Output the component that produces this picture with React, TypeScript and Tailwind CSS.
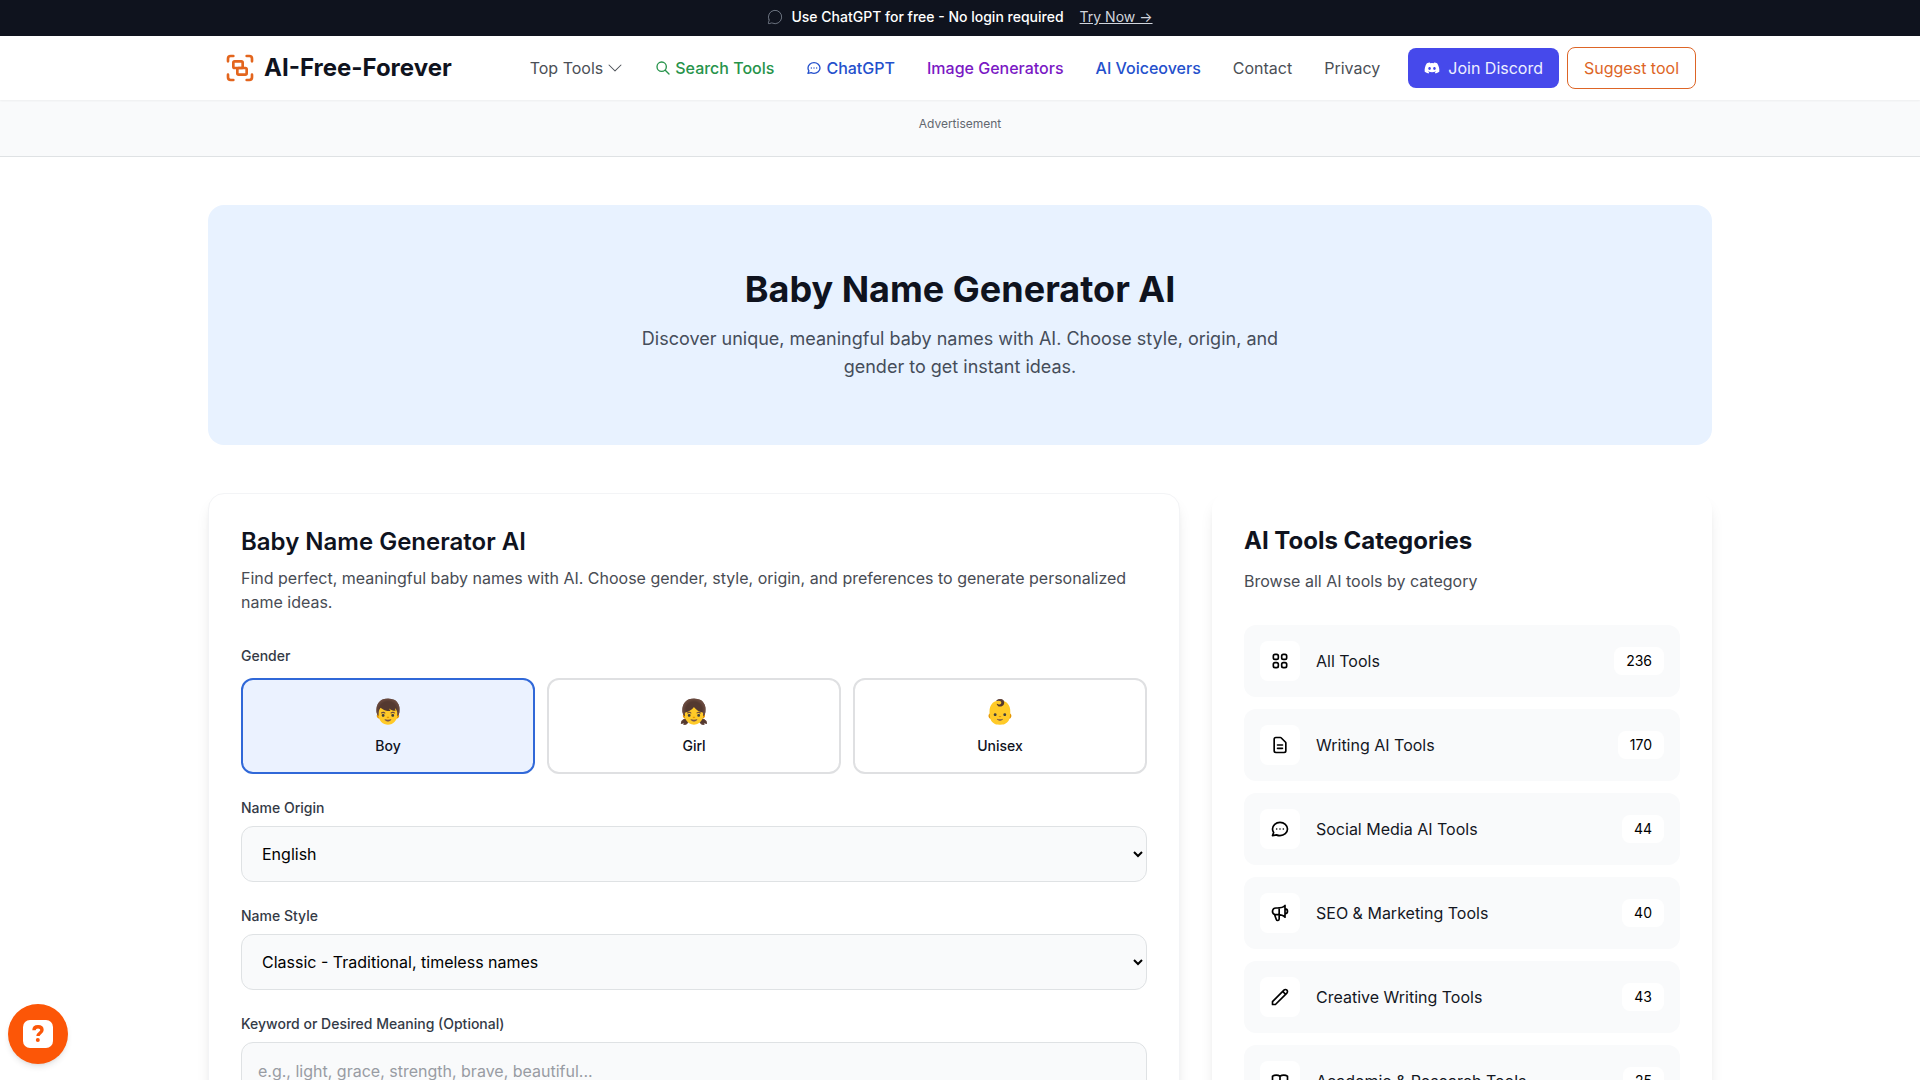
import { useState } from "react";
import { Group, MessageCircle } from "lucide-react";
import { BsChevronDown } from "react-icons/bs";
import { FaDiscord } from "react-icons/fa";
import {
  HiOutlineChat,
  HiOutlineDocumentText,
  HiOutlinePencil,
  HiOutlineSearch,
  HiOutlineSpeakerphone,
  HiOutlineBookOpen,
  HiOutlineViewGrid,
} from "react-icons/hi";

const genders = [
  { id: "boy", label: "Boy", emoji: "👦" },
  { id: "girl", label: "Girl", emoji: "👧" },
  { id: "unisex", label: "Unisex", emoji: "👶" },
];

const categories = [
  { name: "All Tools", count: 236, icon: HiOutlineViewGrid },
  { name: "Writing AI Tools", count: 170, icon: HiOutlineDocumentText },
  { name: "Social Media AI Tools", count: 44, icon: HiOutlineChat },
  { name: "SEO & Marketing Tools", count: 40, icon: HiOutlineSpeakerphone },
  { name: "Creative Writing Tools", count: 43, icon: HiOutlinePencil },
  { name: "Academic & Research Tools", count: 25, icon: HiOutlineBookOpen },
];

const TopBanner = () => (
  <div className="flex h-9 items-center justify-center bg-[#0f131e] pb-0.5 text-sm font-medium text-white">
    <MessageCircle className="mr-2 h-4 w-4 text-gray-400" strokeWidth={1} />
    <span>Use ChatGPT for free - No login required</span>
    <a href="#chatgpt" className="ml-4 font-normal text-gray-300 underline">
      Try Now →
    </a>
  </div>
);

const Navbar = () => (
  <header className="relative z-10 bg-white shadow-xs">
    <div className="mx-auto flex h-16 max-w-screen-2xl items-center justify-between px-8">
      <a href="#home" className="flex items-center gap-2 text-2xl font-bold text-[#0f131e]">
        <Group className="h-8 w-8 text-[#e3651d]" />
        <span>AI-Free-Forever</span>
      </a>
      <div className="flex items-center gap-7">
        <nav className="flex items-center gap-8 text-[#4b4f56]">
          <button type="button" className="flex items-center gap-1">
            Top Tools
            <BsChevronDown className="h-4 w-4" />
          </button>
          <a href="#search" className="flex items-center gap-1 font-medium text-[#26934a]">
            <HiOutlineSearch className="h-4 w-4" />
            Search Tools
          </a>
          <a href="#chatgpt" className="flex items-center gap-1 font-medium text-[#2450cc]">
            <HiOutlineChat className="h-4 w-4" />
            ChatGPT
          </a>
          <a href="#images" className="font-medium text-[#7a18c4]">
            Image Generators
          </a>
          <a href="#voiceovers" className="font-medium text-[#2450cc]">
            AI Voiceovers
          </a>
          <a href="#contact">Contact</a>
          <a href="#privacy">Privacy</a>
        </nav>
        <div className="flex items-center gap-2">
          <a
            href="#discord"
            className="flex items-center gap-2 rounded-lg bg-[#4649eb] px-4 py-2 text-[#eef0ff]"
          >
            <FaDiscord className="h-4 w-4 text-white" />
            Join Discord
          </a>
          <a
            href="#suggest"
            className="rounded-lg border border-[#dd6526] px-4 py-2 text-[#dd6526]"
          >
            Suggest tool
          </a>
        </div>
      </div>
    </div>
  </header>
);

const NameForm = () => {
  const [gender, setGender] = useState("boy");

  return (
    <section className="rounded-2xl border border-gray-100 bg-white p-8 shadow-lg">
      <h2 className="text-2xl font-semibold text-[#0f131e]">Baby Name Generator AI</h2>
      <p className="mt-2 text-[#484c54]">
        Find perfect, meaningful baby names with AI. Choose gender, style, origin, and preferences
        to generate personalized name ideas.
      </p>

      <form className="mt-8 flex flex-col gap-6">
        {/* Gender */}
        <fieldset>
          <legend className="mb-3 text-sm font-medium text-[#343a46]">Gender</legend>
          <div className="grid grid-cols-3 gap-3">
            {genders.map((g) => (
              <button
                key={g.id}
                type="button"
                aria-pressed={gender === g.id}
                onClick={() => setGender(g.id)}
                className={`flex flex-col items-center gap-2 rounded-xl border-2 p-4 ${
                  gender === g.id ? "border-[#3068d8] bg-[#ebf2ff]" : "border-[#dfe0e2] bg-white"
                }`}
              >
                <span className="text-2xl">{g.emoji}</span>
                <span className="text-sm font-medium text-[#0f131e]">{g.label}</span>
              </button>
            ))}
          </div>
        </fieldset>

        {/* Origin */}
        <div className="flex flex-col gap-2">
          <label htmlFor="origin" className="text-sm font-medium text-[#343a46]">
            Name Origin
          </label>
          <select
            id="origin"
            className="h-14 w-full rounded-xl border border-[#dfe2e4] bg-gray-50 px-4 text-black"
          >
            <option>English</option>
          </select>
        </div>

        {/* Style */}
        <div className="flex flex-col gap-2">
          <label htmlFor="style" className="text-sm font-medium text-[#343a46]">
            Name Style
          </label>
          <select
            id="style"
            className="h-14 w-full rounded-xl border border-[#dfe2e4] bg-gray-50 px-4 text-black"
          >
            <option>Classic - Traditional, timeless names</option>
          </select>
        </div>

        {/* Keyword */}
        <div className="flex flex-col gap-2">
          <label htmlFor="keyword" className="text-sm font-medium text-[#343a46]">
            Keyword or Desired Meaning (Optional)
          </label>
          <input
            id="keyword"
            type="text"
            placeholder="e.g., light, grace, strength, brave, beautiful..."
            className="w-full rounded-xl border border-[#dfe2e4] bg-gray-50 p-4 placeholder:text-[#989ca3]"
          />
        </div>
      </form>
    </section>
  );
};

const Categories = () => (
  <aside className="rounded-2xl bg-white p-8 shadow-lg">
    <h2 className="text-2xl font-bold text-[#0f131e]">AI Tools Categories</h2>
    <p className="mt-3 text-[#484c54]">Browse all AI tools by category</p>
    <ul className="mt-8 flex flex-col gap-3">
      {categories.map(({ name, count, icon: Icon }) => (
        <li key={name}>
          <a href="#category" className="flex items-center gap-4 rounded-xl bg-gray-50 p-4">
            <span className="flex h-10 w-10 items-center justify-center rounded-lg bg-white text-black">
              <Icon className="h-5 w-5" />
            </span>
            <span className="grow text-[#14171f]">{name}</span>
            <span className="rounded-lg bg-white px-3 py-1 text-sm text-black">{count}</span>
          </a>
        </li>
      ))}
    </ul>
  </aside>
);

const HelpButton = () => (
  <button
    type="button"
    aria-label="Help"
    className="fixed bottom-4 left-2 flex h-15 w-15 items-center justify-center rounded-full bg-[#fc5607] shadow-md"
  >
    <svg viewBox="0 0 30 28" className="h-7 w-8" fill="none">
      <rect width="30" height="28" rx="7" fill="#fff" />
      <path
        d="M11 10.300c0-2.400 1.700-3.600 4-3.600s4 1.300 4 3.400c0 2.900-4 2.900-4 5.900"
        stroke="#fc5607"
        strokeWidth="3.400"
      />
      <circle cx="14.800" cy="20" r="2" fill="#fc5607" />
    </svg>
  </button>
);

const App = () => {
  return (
    <div className="h-screen overflow-y-auto overflow-x-hidden bg-white font-['Inter',sans-serif] [scrollbar-width:none]">
      <TopBanner />
      <Navbar />

      <div className="border-b border-[#dfe2e4] bg-gray-50 py-4 text-center">
        <p className="mb-2 text-xs text-[#62676f]">Advertisement</p>
      </div>

      <main className="mx-auto max-w-screen-2xl px-4 py-12">
        <section className="rounded-2xl bg-[#e8f2ff] px-4 py-16 text-center">
          <h1 className="text-4xl font-bold text-[#0f131e]">Baby Name Generator AI</h1>
          <p className="mx-auto mt-4 max-w-2xl text-lg text-[#454d5a]">
            Discover unique, meaningful baby names with AI. Choose style, origin, and gender to get
            instant ideas.
          </p>
        </section>

        <div className="mt-12 grid grid-cols-[1fr_500px] items-start gap-8">
          <NameForm />
          <Categories />
        </div>
      </main>

      <HelpButton />
    </div>
  );
};

export default App;
